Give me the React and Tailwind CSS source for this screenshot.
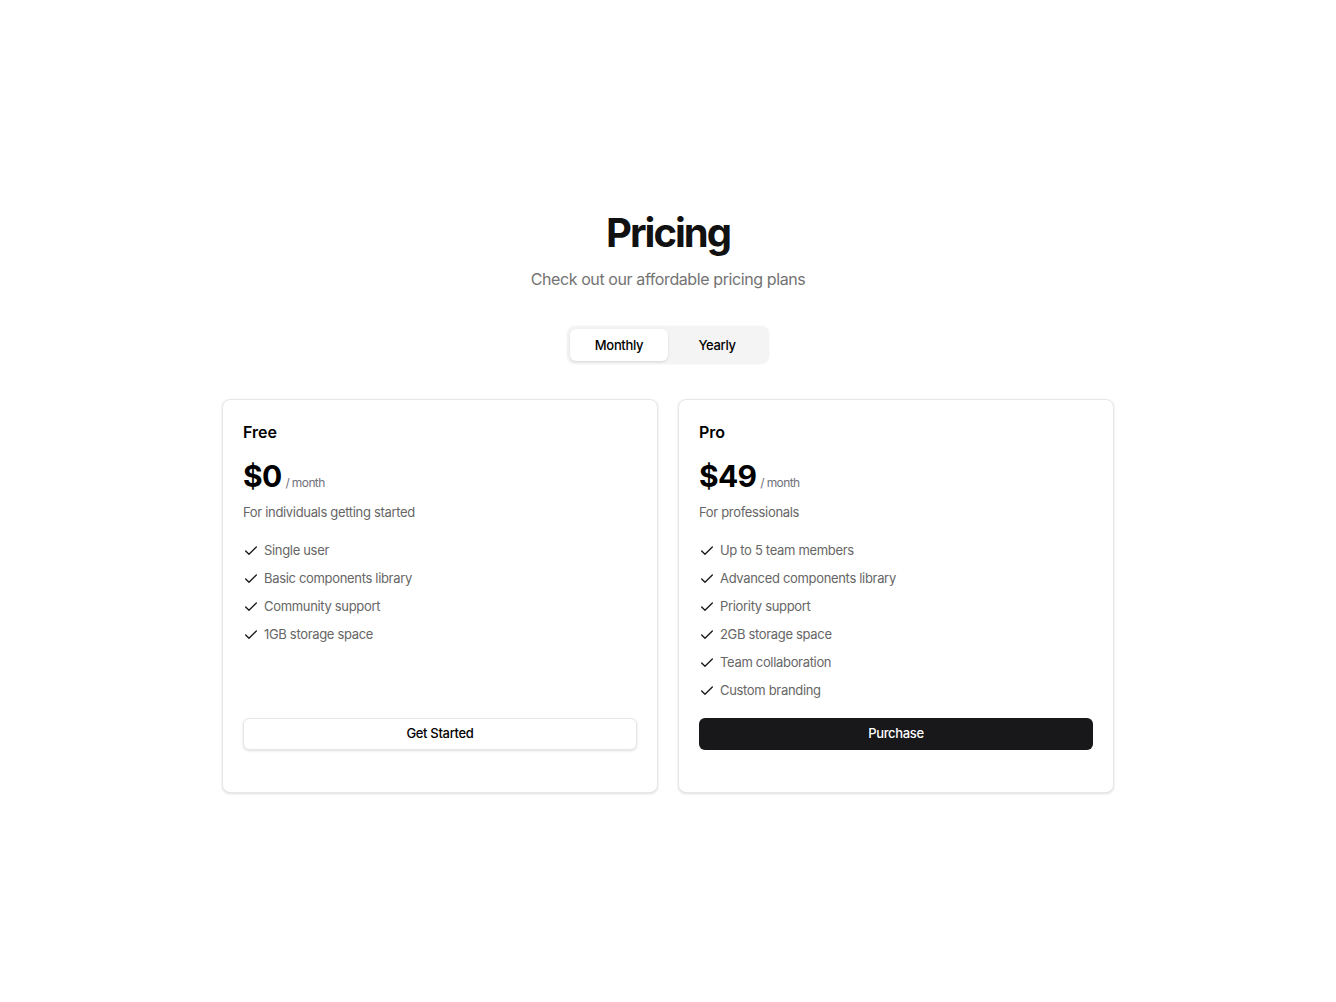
import { Check } from 'lucide-react';

const plans = [
	{
		name: 'Free',
		price: '$0',
		description: 'For individuals getting started',
		features: [ 'Single user', 'Basic components library', 'Community support', '1GB storage space' ],
		cta: 'Get Started',
		primary: false,
	},
	{
		name: 'Pro',
		price: '$49',
		description: 'For professionals',
		features: [
			'Up to 5 team members',
			'Advanced components library',
			'Priority support',
			'2GB storage space',
			'Team collaboration',
			'Custom branding',
		],
		cta: 'Purchase',
		primary: true,
	},
];

const PlanCard = ( { plan } ) => (
	<div className="flex flex-col rounded-lg border border-gray-200 bg-white px-5 pt-5 pb-[42px] shadow-sm">
		<h3 className="text-base font-semibold text-black">{ plan.name }</h3>
		<div className="mt-[14px] flex items-baseline gap-1">
			<span className="text-3xl font-bold tracking-tight text-black">{ plan.price }</span>
			<span className="text-xs tracking-tighter text-zinc-500">/ month</span>
		</div>
		<p className="mt-[9px] text-[13px] tracking-tight text-[#666]">{ plan.description }</p>
		<ul className="mt-[18px] flex flex-1 flex-col gap-2">
			{ plan.features.map( ( feature ) => (
				<li key={ feature } className="flex h-5 items-center gap-[5px] text-[13px] tracking-tight text-[#666]">
					<Check className="h-4 w-4 text-zinc-900" strokeWidth={ 2 } />
					{ feature }
				</li>
			) ) }
		</ul>
		<button
			className={
				plan.primary
					? 'mt-[17px] h-8 w-full rounded-md bg-[#18181b] text-[13px] font-medium tracking-tight text-white'
					: 'mt-[17px] h-8 w-full rounded-md border border-gray-200 bg-white text-[13px] font-medium tracking-tight text-black shadow-sm'
			}
		>
			{ plan.cta }
		</button>
	</div>
);

const App = () => {
	return (
		<div className="flex min-h-screen items-center justify-center bg-white font-['Inter',sans-serif]">
			<div className="flex w-[892px] flex-col items-center">
				<h1 className="text-[40px] leading-[48px] font-bold tracking-tighter text-[#111]">Pricing</h1>
				<p className="mt-[10px] text-base tracking-tight text-neutral-500">
					Check out our affordable pricing plans
				</p>
				<div className="mt-[35px] grid grid-cols-2 rounded-lg bg-zinc-100 p-[3px] shadow-[0_0_0_1px_rgba(0,0,0,0.02)]">
					<button className="h-8 w-[98px] rounded-md bg-white text-[13px] font-medium tracking-tight text-black shadow-sm">
						Monthly
					</button>
					<button className="h-8 w-[98px] rounded-md text-[13px] font-medium tracking-tight text-black">
						Yearly
					</button>
				</div>
				<div className="mt-[35px] grid w-full grid-cols-2 gap-5">
					{ plans.map( ( plan ) => (
						<PlanCard key={ plan.name } plan={ plan } />
					) ) }
				</div>
			</div>
		</div>
	);
};

export default App;
